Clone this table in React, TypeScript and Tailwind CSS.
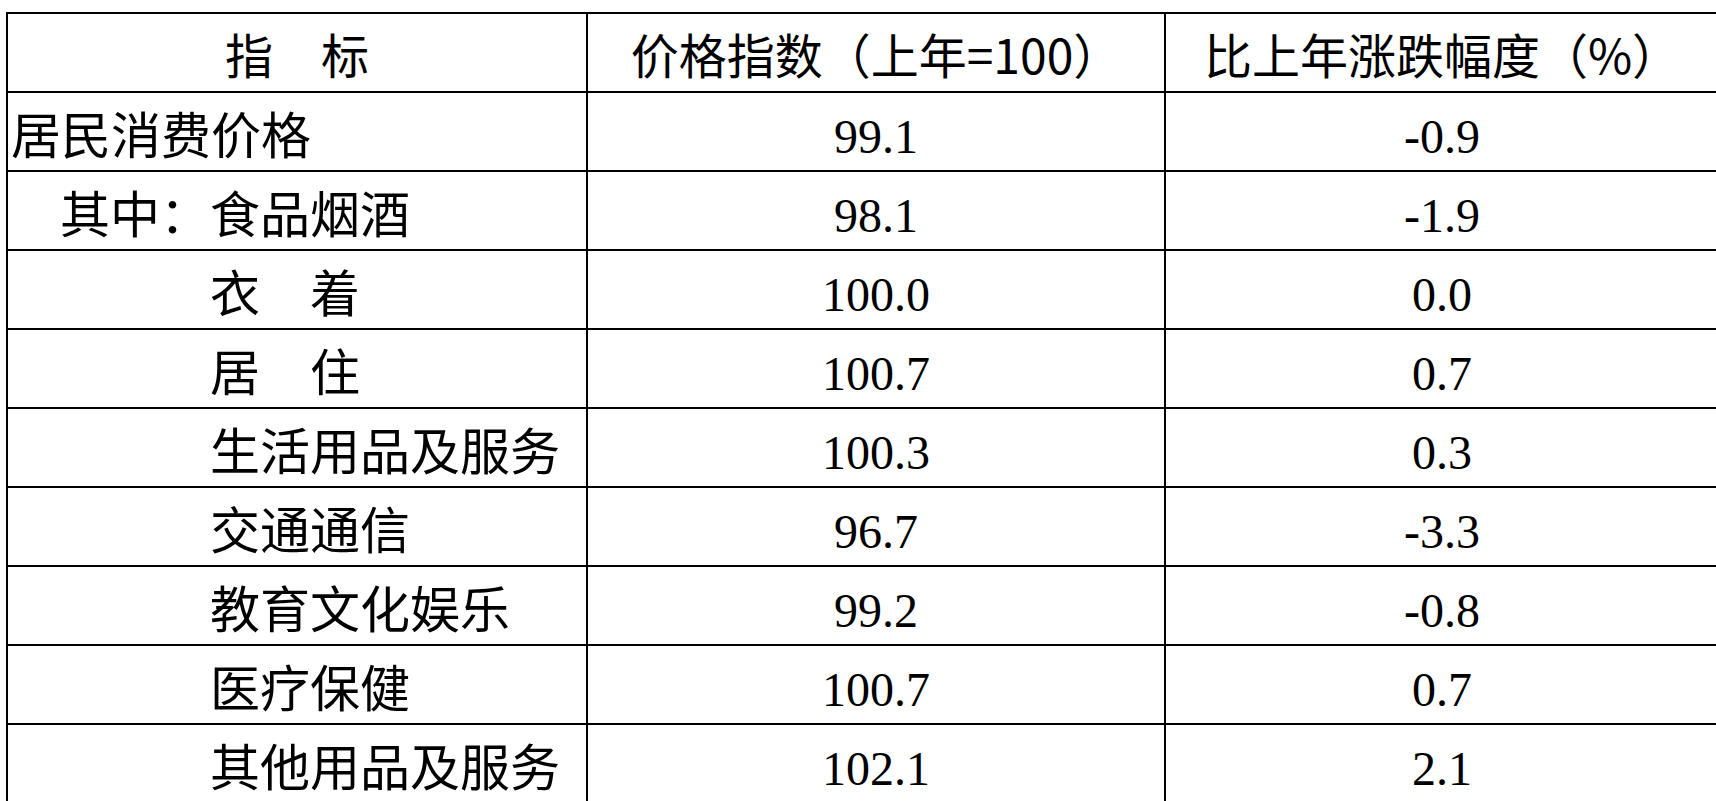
import React from 'react';

type Row = {
  name: string;
  indent: 'top' | 'sub' | 'item';
  index: string;
  change: string;
};

const rows: Row[] = [
  { name: '居民消费价格', indent: 'top', index: '99.1', change: '-0.9' },
  { name: '其中：食品烟酒', indent: 'sub', index: '98.1', change: '-1.9' },
  { name: '衣　着', indent: 'item', index: '100.0', change: '0.0' },
  { name: '居　住', indent: 'item', index: '100.7', change: '0.7' },
  { name: '生活用品及服务', indent: 'item', index: '100.3', change: '0.3' },
  { name: '交通通信', indent: 'item', index: '96.7', change: '-3.3' },
  { name: '教育文化娱乐', indent: 'item', index: '99.2', change: '-0.8' },
  { name: '医疗保健', indent: 'item', index: '100.7', change: '0.7' },
  { name: '其他用品及服务', indent: 'item', index: '102.1', change: '2.1' }
];

const indentClass = {
  top: 'pl-[3px]',
  sub: 'pl-[52px]',
  item: 'pl-[202px]'
};

const cell = 'h-[79px] border-r-2 border-b-2 border-black flex items-center';
const headFont = "font-['Noto_Sans_CJK_SC',sans-serif]";
const bodyFont = "font-['Liberation_Serif','Noto_Sans_CJK_SC',serif]";

function App() {
  return (
    <div className="w-[1716px] h-[801px] overflow-hidden bg-white text-black">
      <div className="ml-[6px] mt-[12px] w-[1714px] grid grid-cols-[580px_578px_554px] border-l-2 border-t-2 border-black">
        {/* 표 머리 */}
        <div className={`${cell} justify-center ${headFont} text-[48px] leading-none`}>指　标</div>
        <div className={`${cell} justify-center ${headFont} text-[48px] leading-none`}>价格指数（上年=100）</div>
        <div className={`${cell} justify-center ${headFont} text-[48px] leading-none`}>比上年涨跌幅度（%）</div>

        {rows.map((row) => (
          <React.Fragment key={row.name}>
            <div className={`${cell} ${indentClass[row.indent]} ${bodyFont} text-[50px] leading-none pt-[10px]`}>
              {row.name}
            </div>
            <div className={`${cell} justify-center ${bodyFont} text-[48px] leading-none pt-[10px]`}>{row.index}</div>
            <div className={`${cell} justify-center ${bodyFont} text-[48px] leading-none pt-[10px]`}>{row.change}</div>
          </React.Fragment>
        ))}
      </div>
    </div>
  );
}

export default App;
